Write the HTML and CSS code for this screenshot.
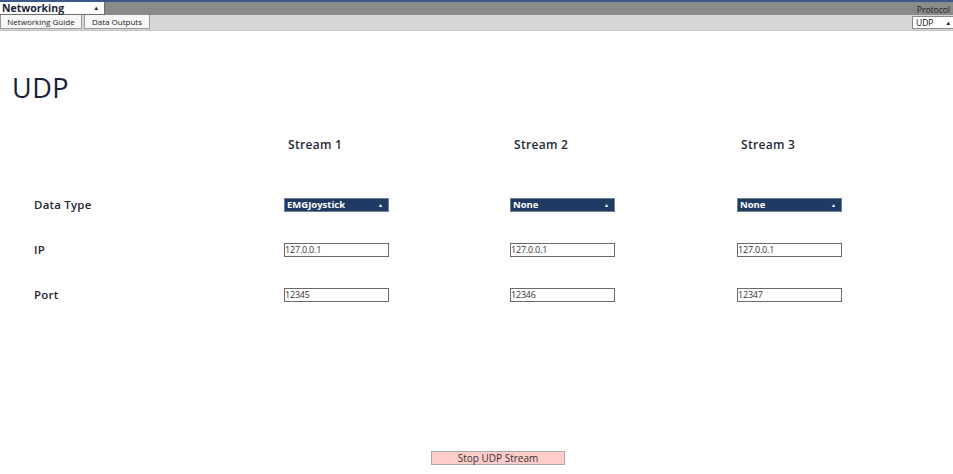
FILE: index.html
```html
<!DOCTYPE html>
<html>
<head>
<meta charset="utf-8">
<link rel="stylesheet" href="styles.css">
</head>
<body>
<div class="topbar">
  <div class="bar1">
    <div class="navsel"><span>Networking</span><span class="caret">&#9652;</span></div>
    <div class="protolabel">Protocol</div>
  </div>
  <div class="bar2">
    <div class="tabs">
      <div class="tab tab1">Networking Guide</div>
      <div class="tab tab2">Data Outputs</div>
    </div>
    <div class="protosel"><span>UDP</span><span class="caret">&#9652;</span></div>
  </div>
</div>
<main class="main">
  <h1 class="title">UDP</h1>
  <div class="grid headrow">
    <div class="cell"></div>
    <div class="cell head">Stream 1</div>
    <div class="cell head">Stream 2</div>
    <div class="cell head">Stream 3</div>
  </div>
  <div class="grid">
    <div class="cell label">Data Type</div>
    <div class="cell"><div class="dd"><span>EMGJoystick</span><span class="caret">&#9652;</span></div></div>
    <div class="cell"><div class="dd"><span>None</span><span class="caret">&#9652;</span></div></div>
    <div class="cell"><div class="dd"><span>None</span><span class="caret">&#9652;</span></div></div>

    <div class="cell label">IP</div>
    <div class="cell"><div class="inp">127.0.0.1</div></div>
    <div class="cell"><div class="inp">127.0.0.1</div></div>
    <div class="cell"><div class="inp">127.0.0.1</div></div>

    <div class="cell label">Port</div>
    <div class="cell"><div class="inp">12345</div></div>
    <div class="cell"><div class="inp">12346</div></div>
    <div class="cell"><div class="inp">12347</div></div>
  </div>
  <div class="btnrow"><div class="btn">Stop UDP Stream</div></div>
</main>
</body>
</html>
```
FILE: styles.css
```css
html, body { margin: 0; padding: 0; background: #fff; }
body { width: 953px; height: 474px; overflow: hidden; font-family: "Open Sans", "DejaVu Sans", sans-serif; color: #1c2536; }
.topbar { display: flex; flex-direction: column; }
.bar1 { height: 13px; background: #8a8a8a; border-top: 2px solid #3b5a8a; display: flex; justify-content: space-between; align-items: stretch; }
.navsel { width: 105px; background: #fff; border: 1px solid #6d6d6d; border-top: none; border-left: none; box-sizing: border-box; display: flex; justify-content: space-between; align-items: center; padding: 0 6px 0 2px; font-size: 10.5px; font-weight: 700; color: #1a2438; line-height: 12px; }
.caret { font-size: 7px; color: #222; }
.protolabel { font-size: 8.5px; color: #222; align-self: flex-end; padding-right: 3px; line-height: 10px; }
.bar2 { height: 15px; background: #d6d6d6; display: flex; justify-content: space-between; align-items: flex-start; border-bottom: 1px solid #c4c4c4; }
.tabs { display: flex; gap: 2px; }
.tab { height: 14px; box-sizing: border-box; background: #f7f7f7; border: 1px solid #9a9a9a; border-top: none; font-size: 8px; line-height: 13px; color: #222; white-space: nowrap; text-align: center; }
.tab1 { width: 82px; }
.tab2 { width: 66px; }
.protosel { width: 41px; height: 13px; margin-top: 1px; background: #fff; border: 1px solid #8a8a8a; border-right: none; box-sizing: border-box; display: flex; justify-content: space-between; align-items: center; padding: 0 3px; font-size: 8.5px; color: #111; }
.main { padding: 0; }
.title { margin: 0; padding: 40px 0 0 12px; font-size: 27px; font-weight: 500; line-height: 34px; color: #172338; letter-spacing: 0.5px; }
.grid { display: grid; grid-template-columns: 250px 226px 227px 227px; grid-auto-rows: 45px; padding-left: 34px; }
.headrow { grid-auto-rows: 46px; margin-top: 16px; margin-bottom: 15px; }
.cell { display: flex; align-items: center; }
.head { font-size: 12px; font-weight: 600; padding-left: 4px; color: #222a36; letter-spacing: 0.3px; }
.label { font-size: 11.5px; font-weight: 600; color: #1f2633; letter-spacing: 0.2px; }
.dd { width: 105px; height: 14px; box-sizing: border-box; background: #1f3b63; border: 1px solid #6f7f95; color: #fff; font-size: 9.5px; font-weight: 700; display: flex; justify-content: space-between; align-items: center; padding: 0 6px 0 2px; }
.dd .caret { color: #fff; font-size: 6px; }
.inp { width: 105px; height: 14px; box-sizing: border-box; border: 1px solid #6b6b6b; background: #fff; font-size: 9px; line-height: 12px; color: #333; letter-spacing: -0.2px; }
.btnrow { display: flex; justify-content: center; padding-top: 134px; padding-left: 43px; }
.btn { width: 134px; height: 14px; box-sizing: border-box; background: #ffcccc; border: 1px solid #a8a8a8; font-size: 10px; line-height: 12px; text-align: center; color: #333; }
```
